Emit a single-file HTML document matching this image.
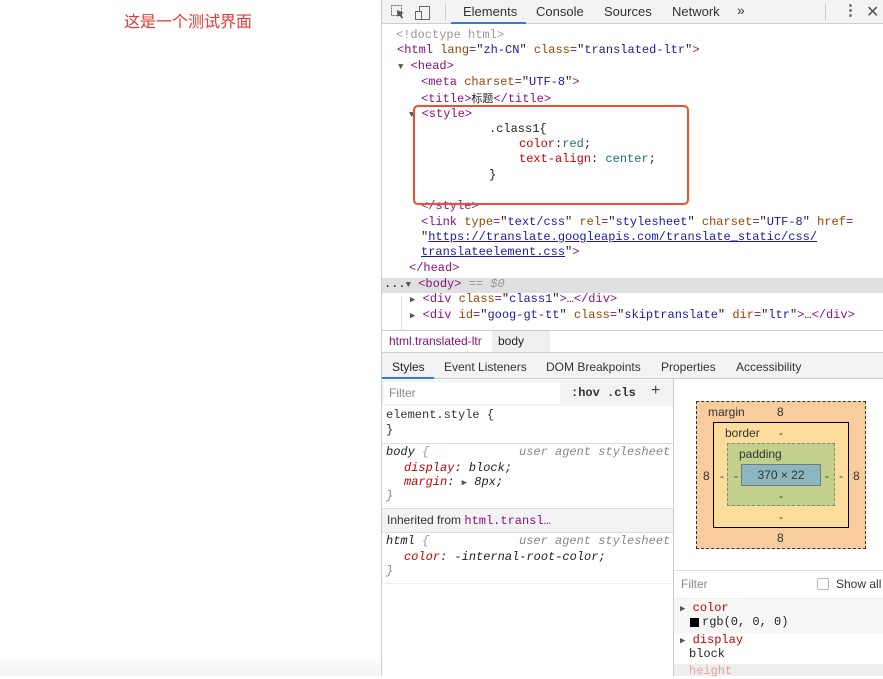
<!DOCTYPE html>
<html><head><meta charset="utf-8"><style>
*{margin:0;padding:0;box-sizing:border-box}
body{width:883px;height:676px;overflow:hidden;background:#fff;position:relative;font-family:"Liberation Sans",sans-serif;font-size:12px;color:#222}
.a{position:absolute;white-space:pre}
.m{font-family:"Liberation Mono","DejaVu Sans Mono",monospace;font-size:12px;line-height:15px}
.t{color:#881280}.n{color:#994500}.v{color:#1a1aa6}.g{color:#999}.p{color:#c80000}.c{color:#1a6f80}
.u{color:#1a1aa6;text-decoration:underline}
.tri{color:#555;font-size:9px}
</style></head><body>
<div class="a" style="left:124px;top:8px;font-family:'Liberation Sans','Noto Sans CJK SC',sans-serif;font-size:16px;color:#e53935">这是一个测试界面</div>
<div class="a" style="left:0;top:655px;width:381px;height:21px;background:linear-gradient(#fff,#f4f4f4)"></div>
<div class="a" style="left:381px;top:0;width:1px;height:676px;background:#ccc"></div>
<div class="a" style="left:382px;top:0;width:501px;height:24px;background:#f3f3f3;border-bottom:1px solid #ccc"></div>
<svg class="a" style="left:390px;top:4px" width="46" height="16"><rect x="1.5" y="1.5" width="10" height="10" fill="none" stroke="#666" stroke-dasharray="2 1"/><path d="M7 6 L14 9 L11 10 L13 14 L11.5 14.5 L9.5 11 L7.5 13 Z" fill="#555"/><rect x="29.5" y="2.5" width="10" height="13" fill="none" stroke="#666"/><rect x="25.5" y="7.5" width="6" height="8" fill="#f3f3f3" stroke="#666"/></svg>
<div class="a" style="left:445px;top:4px;width:1px;height:16px;background:#ccc"></div>
<div class="a" style="left:463px;top:4px;font-size:13px;color:#333">Elements</div>
<div class="a" style="left:451px;top:22px;width:75px;height:2px;background:#3879d9"></div>
<div class="a" style="left:536px;top:4px;font-size:13px;color:#333">Console</div>
<div class="a" style="left:604px;top:4px;font-size:13px;color:#333">Sources</div>
<div class="a" style="left:672px;top:4px;font-size:13px;color:#333">Network</div>
<div class="a" style="left:737px;top:2px;font-size:14px;color:#333">»</div>
<div class="a" style="left:825px;top:4px;width:1px;height:16px;background:#ccc"></div>
<div class="a" style="left:843px;top:1px;font-size:15px;color:#555;font-weight:bold">⋮</div>
<div class="a" style="left:866px;top:2px;font-size:16px;color:#555">✕</div>
<div class="a" style="left:382px;top:278px;width:501px;height:15px;background:#e0e0e0"></div>
<div class="a m" style="left:396px;top:28px"><span class="g">&lt;!doctype html&gt;</span></div>
<div class="a m" style="left:397px;top:43px"><span class="t">&lt;html</span> <span class="n">lang</span><span class="t">=</span>"<span class="v">zh-CN</span>" <span class="n">class</span><span class="t">=</span>"<span class="v">translated-ltr</span>"<span class="t">&gt;</span></div>
<div class="a m" style="left:398px;top:59px"><span class="tri">▼</span> <span class="t">&lt;head&gt;</span></div>
<div class="a m" style="left:421px;top:75px"><span class="t">&lt;meta</span> <span class="n">charset</span><span class="t">=</span>"<span class="v">UTF-8</span>"<span class="t">&gt;</span></div>
<div class="a m" style="left:421px;top:91px"><span class="t">&lt;title&gt;</span><span style="font-family:'Noto Sans CJK SC',sans-serif;font-size:11px">标题</span><span class="t">&lt;/title&gt;</span></div>
<div class="a m" style="left:409px;top:107px"><span class="tri">▼</span> <span class="t">&lt;style&gt;</span></div>
<div class="a m" style="left:489px;top:122px">.class1{</div>
<div class="a m" style="left:519px;top:137px"><span class="p">color</span>:<span class="c">red</span>;</div>
<div class="a m" style="left:519px;top:152px"><span class="p">text-align</span>: <span class="c">center</span>;</div>
<div class="a m" style="left:489px;top:168px">}</div>
<div class="a m" style="left:421px;top:199px"><span class="t">&lt;/style&gt;</span></div>
<div class="a" style="left:413px;top:105px;width:276px;height:100px;border:2.5px solid #ee4f2c;border-radius:5px"></div>
<div class="a m" style="left:421px;top:215px"><span class="t">&lt;link</span> <span class="n">type</span><span class="t">=</span>"<span class="v">text/css</span>" <span class="n">rel</span><span class="t">=</span>"<span class="v">stylesheet</span>" <span class="n">charset</span><span class="t">=</span>"<span class="v">UTF-8</span>" <span class="n">href</span><span class="t">=</span></div>
<div class="a m" style="left:421px;top:230px">"<span class="u">https://translate.googleapis.com/translate_static/css/</span></div>
<div class="a m" style="left:421px;top:245px"><span class="u">translateelement.css</span>"<span class="t">&gt;</span></div>
<div class="a m" style="left:409px;top:261px"><span class="t">&lt;/head&gt;</span></div>
<div class="a m" style="left:384px;top:277px">...<span class="tri">▼</span> <span class="t">&lt;body&gt;</span> <span class="g">== <i>$0</i></span></div>
<div class="a m" style="left:410px;top:292px"><span class="tri">▶</span> <span class="t">&lt;div</span> <span class="n">class</span><span class="t">=</span>"<span class="v">class1</span>"<span class="t">&gt;</span>…<span class="t">&lt;/div&gt;</span></div>
<div class="a m" style="left:410px;top:308px"><span class="tri">▶</span> <span class="t">&lt;div</span> <span class="n">id</span><span class="t">=</span>"<span class="v">goog-gt-tt</span>" <span class="n">class</span><span class="t">=</span>"<span class="v">skiptranslate</span>" <span class="n">dir</span><span class="t">=</span>"<span class="v">ltr</span>"<span class="t">&gt;</span>…<span class="t">&lt;/div&gt;</span></div>
<div class="a" style="left:401px;top:296px;width:1px;height:34px;background:#ddd"></div>
<div class="a" style="left:382px;top:330px;width:501px;height:23px;background:#fff;border-top:1px solid #ccc;border-bottom:1px solid #ccc"></div>
<div class="a" style="left:492px;top:331px;width:58px;height:21px;background:#f0f0f0"></div>
<div class="a" style="left:389px;top:334px;color:#881280">html.translated-ltr</div>
<div class="a" style="left:498px;top:334px;color:#222">body</div>
<div class="a" style="left:382px;top:353px;width:501px;height:26px;background:#f3f3f3;border-bottom:1px solid #ccc"></div>
<div class="a" style="left:392px;top:360px;color:#222">Styles</div>
<div class="a" style="left:382px;top:377px;width:52px;height:2px;background:#3879d9"></div>
<div class="a" style="left:444px;top:360px;color:#333">Event Listeners</div>
<div class="a" style="left:546px;top:360px;color:#333">DOM Breakpoints</div>
<div class="a" style="left:661px;top:360px;color:#333">Properties</div>
<div class="a" style="left:736px;top:360px;color:#333">Accessibility</div>
<div class="a" style="left:673px;top:379px;width:1px;height:297px;background:#ccc"></div>
<div class="a" style="left:382px;top:380px;width:291px;height:26px;background:#f3f3f3"></div>
<div class="a" style="left:384px;top:382px;width:176px;height:22px;background:#fff"></div>
<div class="a" style="left:389px;top:386px;color:#888">Filter</div>
<div class="a m" style="left:571px;top:386px;font-weight:bold;color:#333">:hov .cls</div>
<div class="a" style="left:651px;top:382px;font-size:16px;color:#444">+</div>
<div class="a m" style="left:386px;top:408px;color:#333">element.style {</div>
<div class="a m" style="left:386px;top:423px;color:#333">}</div>
<div class="a" style="left:382px;top:443px;width:291px;height:1px;background:#ddd"></div>
<div class="a m" style="left:386px;top:445px;font-style:italic"><span>body</span> <span class="g">{</span></div>
<div class="a m" style="left:519px;top:445px;font-style:italic;color:#888">user agent stylesheet</div>
<div class="a m" style="left:404px;top:461px;font-style:italic"><span class="p">display</span>: block;</div>
<div class="a m" style="left:404px;top:475px;font-style:italic"><span class="p">margin</span>: <span class="tri" style="font-style:normal">▶</span> 8px;</div>
<div class="a m" style="left:386px;top:489px;font-style:italic;color:#888">}</div>
<div class="a" style="left:382px;top:508px;width:291px;height:25px;background:#f3f3f3;border-top:1px solid #ddd;border-bottom:1px solid #ddd"></div>
<div class="a" style="left:387px;top:513px;color:#333">Inherited from <span class="m t">html.transl…</span></div>
<div class="a m" style="left:386px;top:534px;font-style:italic">html <span class="g">{</span></div>
<div class="a m" style="left:519px;top:534px;font-style:italic;color:#888">user agent stylesheet</div>
<div class="a m" style="left:404px;top:550px;font-style:italic"><span class="p">color</span>: -internal-root-color;</div>
<div class="a m" style="left:386px;top:564px;font-style:italic;color:#888">}</div>
<div class="a" style="left:382px;top:583px;width:291px;height:1px;background:#eee"></div>
<div class="a" style="left:696px;top:401px;width:170px;height:148px;background:#f9cc9d;border:1px dashed #333"></div>
<div class="a" style="left:708px;top:405px;color:#333">margin</div>
<div class="a" style="left:777px;top:405px;color:#333">8</div>
<div class="a" style="left:777px;top:531px;color:#333">8</div>
<div class="a" style="left:703px;top:469px;color:#333">8</div>
<div class="a" style="left:853px;top:469px;color:#333">8</div>
<div class="a" style="left:713px;top:422px;width:136px;height:106px;background:#fddd9b;border:1px solid #000"></div>
<div class="a" style="left:725px;top:426px;color:#333">border</div>
<div class="a" style="left:779px;top:426px;color:#333">-</div>
<div class="a" style="left:779px;top:510px;color:#333">-</div>
<div class="a" style="left:720px;top:469px;color:#333">-</div>
<div class="a" style="left:839px;top:469px;color:#333">-</div>
<div class="a" style="left:727px;top:443px;width:108px;height:63px;background:#c3d08b;border:1px dashed #888"></div>
<div class="a" style="left:739px;top:447px;color:#333">padding</div>
<div class="a" style="left:779px;top:489px;color:#333">-</div>
<div class="a" style="left:734px;top:469px;color:#333">-</div>
<div class="a" style="left:825px;top:469px;color:#333">-</div>
<div class="a" style="left:741px;top:464px;width:80px;height:22px;background:#8cb6c0;border:1px solid #777"></div>
<div class="a" style="left:741px;top:468px;width:80px;text-align:center;color:#333">370 × 22</div>
<div class="a" style="left:674px;top:570px;width:209px;height:1px;background:#ddd"></div>
<div class="a" style="left:681px;top:577px;color:#888">Filter</div>
<div class="a" style="left:817px;top:578px;width:12px;height:12px;border:1px solid #bbb;border-radius:2px;background:#fff"></div>
<div class="a" style="left:836px;top:577px;color:#333">Show all</div>
<div class="a" style="left:674px;top:598px;width:209px;height:1px;background:#eee"></div>
<div class="a" style="left:674px;top:599px;width:209px;height:34px;background:#f6f6f6"></div>
<div class="a m" style="left:680px;top:601px"><span class="tri">▶</span> <span class="p">color</span></div>
<div class="a" style="left:690px;top:618px;width:9px;height:9px;background:#000"></div>
<div class="a m" style="left:702px;top:615px">rgb(0, 0, 0)</div>
<div class="a m" style="left:680px;top:633px"><span class="tri">▶</span> <span class="p">display</span></div>
<div class="a m" style="left:689px;top:647px">block</div>
<div class="a" style="left:674px;top:664px;width:209px;height:12px;background:#eee"></div>
<div class="a m" style="left:689px;top:664px;color:#e8a0a0">height</div>
</body></html>
